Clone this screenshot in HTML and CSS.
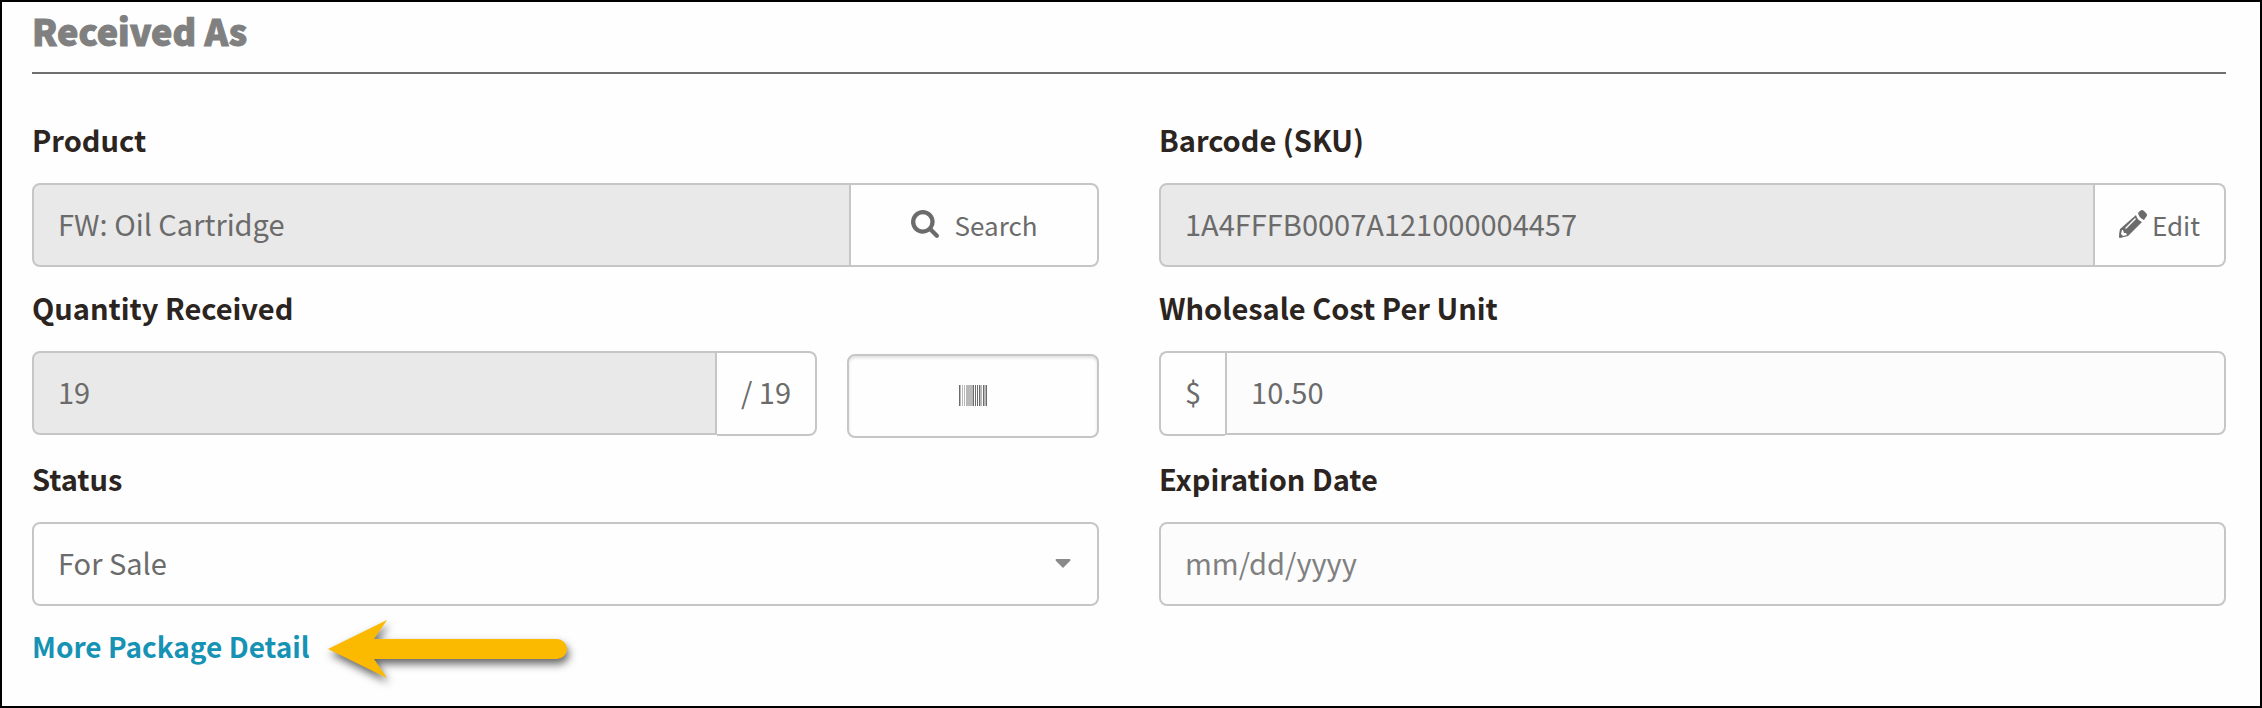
FILE: index.html
```html
<!DOCTYPE html>
<html lang="en">
<head>
    <meta charset="UTF-8">
    <meta name="viewport" content="width=device-width, initial-scale=1.0">
    <title>Received As</title>
    <link rel="stylesheet" href="styles.css">
</head>
<body>

    <form class="panel">
        <h2>Received As</h2>

        <div class="fields">
            <div class="field">
                <label for="product">Product</label>
                <div class="group">
                    <input type="text" id="product" value="FW: Oil Cartridge" readonly>
                    <button type="button" class="search-btn">
                        <svg class="icon" viewBox="0 128 1664 1664" aria-hidden="true"><path d="M1152 832q0-185-131.5-316.5T704 384 387.5 515.5 256 832t131.5 316.5T704 1280t316.5-131.5T1152 832zm512 832q0 52-38 90t-90 38q-54 0-90-38l-343-342q-179 124-399 124-143 0-273.5-55.5t-225-150-150-225T0 832t55.5-273.5 150-225 225-150T704 128t273.5 55.5 225 150 150 225T1408 832q0 220-124 399l343 343q37 37 37 90z"/></svg>
                        Search
                    </button>
                </div>
            </div>

            <div class="field">
                <label for="barcode">Barcode (SKU)</label>
                <div class="group">
                    <input type="text" id="barcode" value="1A4FFFB0007A121000004457" readonly>
                    <button type="button" class="edit-btn">
                        <svg class="icon" viewBox="0 0 28 28" aria-hidden="true">
                            <path d="M19 3l2-2q2-2 4 0l2 2q2 2 0 4l-2 3q-5-2-6-7z"/>
                            <path fill-rule="evenodd" d="M17 5q1 5 6 7L9 26q-4 1-8 2-1 0-1-1 0-4 1-8zM16 8l-10 10 1 1L17 9zM3 20l-1 4 2 2 4-1-1-2-2 0-1-3z"/>
                        </svg>
                        Edit
                    </button>
                </div>
            </div>

            <div class="field">
                <label for="quantity">Quantity Received</label>
                <div class="quantity-row">
                    <div class="group">
                        <input type="text" id="quantity" value="19" readonly>
                        <span class="addon addon-right">/ 19</span>
                    </div>
                    <button type="button" class="scan-btn" aria-label="Scan barcode">
                        <svg class="barcode" viewBox="0 0 28 21" shape-rendering="crispEdges" aria-hidden="true">
                            <path fill="#b9b9b9" d="M1 0h1v21H1zM3 0h1v21H3zM5 0h1v21H5zM7 0h1v21H7zM8 0h6v21H8zM21 0h2v21h-2zM25 0h2v21h-2z"/>
                            <path fill="#6b6b6b" d="M0 0h1v21H0zM14 0h1v21h-1zM16 0h1v21h-1zM18 0h1v21h-1zM20 0h1v21h-1zM24 0h1v21h-1zM27 0h1v21h-1z"/>
                        </svg>
                    </button>
                </div>
            </div>

            <div class="field">
                <label for="cost">Wholesale Cost Per Unit</label>
                <div class="group">
                    <span class="addon addon-left">$</span>
                    <input type="text" id="cost" value="10.50">
                </div>
            </div>

            <div class="field">
                <label for="status">Status</label>
                <div class="select-wrap">
                    <select id="status">
                        <option>For Sale</option>
                    </select>
                    <svg class="caret" viewBox="0 0 16 9" aria-hidden="true"><path d="M1 0h14q1 1 0 2L8 9 1 2q-1-1 0-2z"/></svg>
                </div>
            </div>

            <div class="field">
                <label for="expiration">Expiration Date</label>
                <div class="group">
                    <input type="text" id="expiration" placeholder="mm/dd/yyyy">
                </div>
            </div>
        </div>

        <div class="more">
            <a href="#">More Package Detail</a>
            <svg class="arrow" viewBox="0 0 240 60" aria-hidden="true"><path d="M0 30L59 1 46 20H229a10 10 0 0 1 0 20H46L59 59z"/></svg>
        </div>
    </form>

</body>
</html>
```

FILE: styles.css
```css
* {
    box-sizing: border-box;
}
body {
    margin: 0;
    font-family: "Noto Sans CJK SC", "Noto Sans", sans-serif;
    font-size: 29px;
    color: #6b6b6b;
    background: #fefefe;
}
.panel {
    min-height: 100vh;
    padding: 2px 34px 0 30px;
    border: 2px solid #000;
}
h2 {
    margin: 0 0 41px;
    padding-bottom: 16px;
    border-bottom: 2px solid #6f6f6f;
    font-size: 36px;
    font-weight: 900;
    line-height: 52px;
    color: #808080;
    -webkit-text-stroke: 1px #808080;
}
.fields {
    display: grid;
    grid-template-columns: 1fr 1fr;
    gap: 16px 60px;
}
label {
    display: block;
    margin-bottom: 20px;
    font-weight: bold;
    line-height: 48px;
    color: #2b2420;
}
.group {
    display: flex;
    align-items: flex-start;
    flex: 1;
}
input,
select,
button,
.addon {
    height: 84px;
    margin: 0;
    border: 2px solid #c6c6c6;
    border-radius: 8px;
    font-family: inherit;
    font-size: 29px;
    color: #6b6b6b;
    background: #fefefe;
}
input {
    flex: 1;
    min-width: 0;
    padding: 0 24px 4px;
    background: #fcfcfc;
}
input:read-only {
    background: #e9e9e9;
}
input::placeholder {
    color: #808080;
    opacity: 1;
}
.group input:not(:last-child) {
    border-top-right-radius: 0;
    border-bottom-right-radius: 0;
}
.group input:not(:first-child) {
    border-top-left-radius: 0;
    border-bottom-left-radius: 0;
}
button {
    display: flex;
    align-items: center;
    justify-content: center;
    font-size: 26px;
    padding: 0 0 2px;
    cursor: pointer;
}
.group button {
    border-left: 0;
    border-radius: 0 8px 8px 0;
}
.search-btn {
    gap: 16px;
    width: 248px;
}
.edit-btn {
    gap: 5px;
    width: 131px;
}
.icon {
    width: 28px;
    height: 28px;
    fill: #6b6b6b;
}
.addon {
    height: 85px;
    padding: 0 24px;
    line-height: 76px;
}
.addon-right {
    border-left: 0;
    border-radius: 0 8px 8px 0;
}
.addon-left {
    border-right: 0;
    border-radius: 8px 0 0 8px;
}
.quantity-row {
    display: flex;
    gap: 30px;
}
.scan-btn {
    width: 252px;
    margin-top: 3px;
    box-shadow: inset 0 2px 3px rgba(0, 0, 0, 0.12);
}
.barcode {
    width: 28px;
    height: 21px;
}
.select-wrap {
    position: relative;
}
select {
    display: block;
    width: 100%;
    padding: 0 24px 4px;
    appearance: none;
}
.caret {
    position: absolute;
    top: 37px;
    right: 28px;
    width: 16px;
    height: 9px;
    fill: #8a8a8a;
    pointer-events: none;
}
.more {
    display: flex;
    align-items: center;
    gap: 18px;
    margin-top: 16px;
    line-height: 48px;
}
.more a {
    font-size: 28px;
    font-weight: bold;
    color: #1693b4;
    text-decoration: none;
}
.arrow {
    width: 240px;
    height: 60px;
    margin: -3px 0 -9px;
    fill: #fbb900;
    overflow: visible;
    filter: drop-shadow(2px 5px 4px rgba(0, 0, 0, 0.6));
}
```
